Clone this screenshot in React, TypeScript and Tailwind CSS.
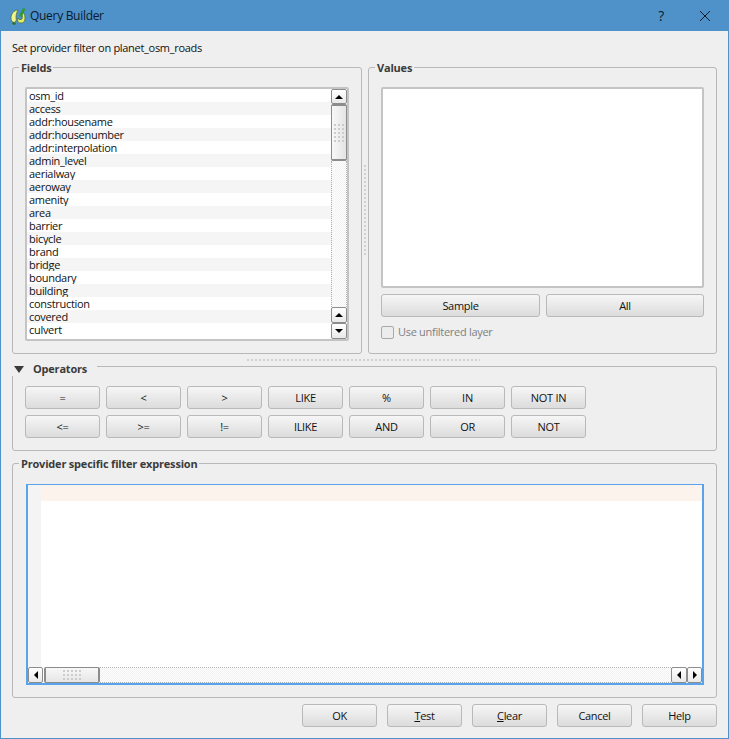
import type { ReactNode } from "react";

const fields = [
  "osm_id", "access", "addr:housename", "addr:housenumber", "addr:interpolation",
  "admin_level", "aerialway", "aeroway", "amenity", "area", "barrier", "bicycle",
  "brand", "bridge", "boundary", "building", "construction", "covered", "culvert",
];

const opsTop = ["=", "<", ">", "LIKE", "%", "IN", "NOT IN"];
const opsBottom = ["<=", ">=", "!=", "ILIKE", "AND", "OR", "NOT"];

function Btn({ className = "w-[75px]", children }: { className?: string; children: ReactNode }) {
  return (
    <div className={`${className} h-[23px] pt-px flex items-center justify-center rounded-[3px] border border-[#b9b9b9] bg-gradient-to-b from-[#f6f6f6] to-[#dcdcdc] text-[#111]`}>
      {children}
    </div>
  );
}

function Group({ title, className, children }: { title: string; className: string; children: ReactNode }) {
  return (
    <div className={`relative rounded-[3px] border border-[#b8b8b8] ${className}`}>
      <span className="absolute left-[6px] top-[-7px] bg-[#efefef] px-[2px] leading-[14px] font-bold text-[11px] tracking-[-0.2px] text-[#3b3b3b]">
        {title}
      </span>
      {children}
    </div>
  );
}

function Arrow({ dir }: { dir: "up" | "down" | "left" | "right" }) {
  const pts = {
    up: "1,7 9,7 5,3",
    down: "1,3 9,3 5,7",
    left: "7,1 7,9 3,5",
    right: "3,1 3,9 7,5",
  }[dir];
  return (
    <svg width="10" height="10" viewBox="0 0 10 10">
      <polygon points={pts} fill="#000" />
    </svg>
  );
}

function ScrollBtn({ dir, className }: { dir: "up" | "down" | "left" | "right"; className: string }) {
  return (
    <div className={`${className} shrink-0 flex items-center justify-center rounded-[2px] border border-[#8c8c8c] bg-gradient-to-b from-white to-[#e9e9e9]`}>
      <Arrow dir={dir} />
    </div>
  );
}

function Grip({ cols, rows }: { cols: number; rows: number }) {
  const dots = [];
  for (let r = 0; r < rows; r++) {
    for (let c = 0; c < cols; c++) {
      dots.push(<rect key={`${r}-${c}`} x={c * 4} y={r * 4} width="2" height="2" fill="#cccccc" />);
    }
  }
  return (
    <svg width={cols * 4 - 2} height={rows * 4 - 2}>
      {dots}
    </svg>
  );
}

function Logo() {
  return (
    <svg width="17" height="18" viewBox="0 0 17 18" className="ml-[10px] mr-[3px]">
      <path d="M8 3C4 3 1 7 1 11c0 3 2 5 4 4 2-1 1-3 1-5 0-3 1-5 2-7z" fill="#f0f48a" stroke="#3f6a2a" strokeWidth="0.7" />
      <path d="M11 5c3 0 4 3 4 6s-1 5-4 5c-3 0-4-2-3-5 1 2 3 2 4 1 1-2 0-5-1-7z" fill="#e6ec6e" stroke="#3f6a2a" strokeWidth="0.7" />
      <path d="M9 9l4-8 2.5 1-4 8z" fill="#2f9a34" />
      <path d="M3 15l3 1-1 2-3-1z" fill="#2f6f2b" />
    </svg>
  );
}

export default function App() {
  return (
    <div className="w-[729px] h-[739px] flex flex-col border-x border-b border-[#4f92ca] bg-[#efefef] font-['Open_Sans',sans-serif] text-[11px] tracking-[-0.3px] text-[#111] overflow-hidden">
      <div className="h-[31px] shrink-0 -mx-px flex items-center bg-[#4f92ca]">
        <Logo />
        <span className="text-[12px] text-[#0b1a28]">Query Builder</span>
        <span className="ml-auto mr-[35px] text-[14px] text-[#0b1a28]">?</span>
        <svg width="12" height="12" viewBox="0 0 12 12" className="mr-[18px]">
          <path d="M1 1l10 10M11 1L1 11" stroke="#0b1a28" strokeWidth="1" />
        </svg>
      </div>

      <div className="flex flex-col px-[11px]">
        <div className="h-[36px] flex items-center pb-[1px]">Set provider filter on planet_osm_roads</div>

        <div className="flex h-[287px]">
          <Group title="Fields" className="w-[350px] pl-[12px] pt-[19px]">
            <div className="w-[324px] h-[254px] flex rounded-[2px] border-2 border-[#c4c4c4] bg-white">
              <div className="flex-1 flex flex-col">
                {fields.map((f, i) => (
                  <div key={f} className={`h-[13px] pt-px pl-[2px] leading-[12px] ${i % 2 ? "bg-[#f5f5f5]" : "bg-white"}`}>
                    {f}
                  </div>
                ))}
              </div>
              <div className="w-[16px] flex flex-col">
                <ScrollBtn dir="up" className="h-[15px]" />
                <div className="h-[57px] shrink-0 flex items-center justify-center rounded-[2px] border-2 border-[#8c8c8c] border-x-[1px] bg-gradient-to-r from-[#f8f8f8] to-[#e4e4e4]">
                  <Grip cols={3} rows={5} />
                </div>
                <div className="flex-1 border-x border-dotted border-[#b0b0b0] bg-[repeating-conic-gradient(#f1f1f1_0_25%,#fff_0_50%)] bg-[length:2px_2px]" />
                <ScrollBtn dir="up" className="h-[16px]" />
                <ScrollBtn dir="down" className="h-[16px]" />
              </div>
            </div>
          </Group>

          <div className="w-[6px] flex items-center justify-center">
            <div className="w-[2px] h-[92px] bg-[linear-gradient(to_bottom,#d0d0d0_2px,transparent_2px)] bg-[length:2px_4px]" />
          </div>

          <Group title="Values" className="w-[349px] pl-[12px] pt-[19px]">
            <div className="w-[323px] h-[201px] rounded-[2px] border-2 border-[#c4c4c4] bg-white" />
            <div className="flex gap-[6px] mt-[6px]">
              <Btn className="w-[159px]">Sample</Btn>
              <Btn className="w-[158px]">All</Btn>
            </div>
            <div className="flex items-center gap-[4px] mt-[7px] text-[#808080]">
              <div className="w-[13px] h-[13px] rounded-[2px] border border-[#a8a8a8] bg-[#ececec]" />
              Use unfiltered layer
            </div>
          </Group>
        </div>

        <div className="h-[12px] flex items-center pl-[235px]">
          <div className="w-[233px] h-[2px] bg-[linear-gradient(to_right,#d0d0d0_2px,transparent_2px)] bg-[length:4px_2px]" />
        </div>

        <div className="relative w-[705px] h-[85px] rounded-[3px] border border-[#b8b8b8] pl-[12px] pt-[19px]">
          <div className="absolute left-[-2px] top-[-4px] w-[86px] h-[13px] flex items-center gap-[9px] bg-[#efefef] pl-[3px]">
            <svg width="10" height="7" viewBox="0 0 10 7">
              <polygon points="0,0 10,0 5,7" fill="#3a3a3a" />
            </svg>
            <span className="font-bold tracking-[-0.2px] text-[#3b3b3b]">Operators</span>
          </div>
          <div className="flex flex-col gap-[6px]">
            {[opsTop, opsBottom].map((row) => (
              <div key={row[0]} className="flex gap-[6px]">
                {row.map((op) => (
                  <Btn key={op}>{op}</Btn>
                ))}
              </div>
            ))}
          </div>
        </div>

        <Group title="Provider specific filter expression" className="w-[705px] h-[235px] mt-[12px] pl-[13px] pt-[20px]">
          <div className="w-[678px] h-[201px] flex flex-col border-2 border-t border-[#5aa2ea] bg-white">
            <div className="flex-1 flex">
              <div className="w-[13px] bg-[#f4f4f4]" />
              <div className="flex-1">
                <div className="h-[16px] bg-[#fbf3ec]" />
              </div>
            </div>
            <div className="h-[16px] flex">
              <ScrollBtn dir="left" className="w-[15px]" />
              <div className="w-[56px] ml-px shrink-0 flex items-center justify-center rounded-[2px] border border-[#8c8c8c] border-x-2 bg-gradient-to-b from-[#f8f8f8] to-[#e6e6e6]">
                <Grip cols={5} rows={3} />
              </div>
              <div className="flex-1 border-y border-dotted border-[#b0b0b0] bg-[repeating-conic-gradient(#f1f1f1_0_25%,#fff_0_50%)] bg-[length:2px_2px]" />
              <ScrollBtn dir="left" className="w-[16px]" />
              <ScrollBtn dir="right" className="w-[15px]" />
            </div>
          </div>
        </Group>

        <div className="flex gap-[10px] justify-end mt-[6px] w-[705px]">
          <Btn>OK</Btn>
          <Btn><span><u>T</u>est</span></Btn>
          <Btn><span><u>C</u>lear</span></Btn>
          <Btn>Cancel</Btn>
          <Btn>Help</Btn>
        </div>
      </div>
    </div>
  );
}
